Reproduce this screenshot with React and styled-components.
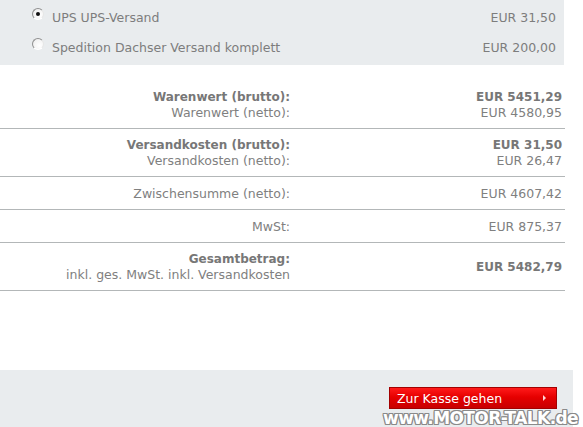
import React from 'react';
import styled, { createGlobalStyle } from 'styled-components';

const GlobalStyle = createGlobalStyle`
  html, body {
    margin: 0;
    padding: 0;
    background: #ffffff;
  }
  body {
    font-family: "DejaVu Sans", Verdana, sans-serif;
    color: #7b7b7b;
  }
`;

const Page = styled.div`
  position: relative;
  width: 583px;
  height: 427px;
  overflow: hidden;
  display: flex;
  flex-direction: column;
  background: #fff;
`;

const ShippingPanel = styled.div`
  width: 564px;
  height: 65px;
  background: #e9ecee;
  box-sizing: border-box;
  padding: 2px 8px 0 32px;
  display: flex;
  flex-direction: column;
`;

const ShippingRow = styled.label`
  display: flex;
  align-items: center;
  height: 30px;
  font-size: 12.5px;
  color: #7d7d7d;
`;

const Radio = styled.span`
  width: 12px;
  height: 12px;
  border-radius: 50%;
  box-sizing: border-box;
  background: radial-gradient(circle at 65% 65%, #ffffff 0%, #f4f4f4 60%, #e2e2e2 100%);
  border: 1px solid;
  border-color: #8f8f8f #e6e6e6 #ffffff #8f8f8f;
  display: flex;
  align-items: center;
  justify-content: center;
  margin-right: 8px;
  margin-top: -6px;

  &::after {
    content: '';
    width: 4px;
    height: 4px;
    border-radius: 50%;
    background: ${(p) => (p.checked ? '#111' : 'transparent')};
  }
`;

const ShipName = styled.span`
  flex: 1;
`;

const ShipPrice = styled.span`
  text-align: right;
`;

const Summary = styled.div`
  width: 565px;
  margin-top: 16px;
`;

const SummaryRow = styled.div`
  display: grid;
  grid-template-columns: 290px 1fr;
  align-items: center;
  padding: 9px 3px 8px 0;
  border-bottom: 1px solid #b3b7b8;
  line-height: 15px;
  color: #7b7b7b;
`;

const Label = styled.div`
  text-align: right;
  display: flex;
  flex-direction: column;
`;

const Amount = styled.div`
  text-align: right;
  display: flex;
  flex-direction: column;
`;

const Line = styled.span`
  font-size: ${(p) => (p.strong ? '12px' : '12.5px')};
  font-weight: ${(p) => (p.strong ? 'bold' : 'normal')};
  color: ${(p) => (p.strong ? '#777777' : '#808080')};
`;

const Spacer = styled.div`
  flex: 1;
`;

const Footer = styled.div`
  width: 573px;
  height: 57px;
  background: #e9ecee;
  box-sizing: border-box;
  padding: 17px 16px 0 0;
  display: flex;
  justify-content: flex-end;
  align-items: flex-start;
`;

const CheckoutButton = styled.button`
  width: 168px;
  height: 22px;
  box-sizing: border-box;
  border: 1px solid #a30000;
  background: linear-gradient(#ff1a1a 0%, #e60000 45%, #c80000 100%);
  color: #ffffff;
  font-family: "DejaVu Sans", Verdana, sans-serif;
  font-size: 12.5px;
  display: flex;
  align-items: center;
  justify-content: space-between;
  padding: 0 10px 0 7px;
  cursor: pointer;
`;

const Arrow = styled.span`
  width: 0;
  height: 0;
  border-top: 3px solid transparent;
  border-bottom: 3px solid transparent;
  border-left: 3px solid #ffd6d6;
`;

const Watermark = styled.span`
  position: absolute;
  right: 5px;
  bottom: 0;
  font-family: "DejaVu Sans", Verdana, sans-serif;
  font-weight: bold;
  font-size: 17px;
  line-height: 18px;
  letter-spacing: -0.6px;
  color: #ffffff;
  text-shadow:
    1px 0 #8a8a8a, -1px 0 #8a8a8a, 0 1px #8a8a8a, 0 -1px #8a8a8a,
    1px 1px #8a8a8a, -1px -1px #8a8a8a, 1px -1px #8a8a8a, -1px 1px #8a8a8a;
  pointer-events: none;
`;

const shipping = [
  { name: 'UPS UPS-Versand', price: 'EUR 31,50', checked: true },
  { name: 'Spedition Dachser Versand komplett', price: 'EUR 200,00', checked: false },
];

const rows = [
  {
    labels: [['Warenwert (brutto):', true], ['Warenwert (netto):', false]],
    amounts: [['EUR 5451,29', true], ['EUR 4580,95', false]],
  },
  {
    labels: [['Versandkosten (brutto):', true], ['Versandkosten (netto):', false]],
    amounts: [['EUR 31,50', true], ['EUR 26,47', false]],
  },
  {
    labels: [['Zwischensumme (netto):', false]],
    amounts: [['EUR 4607,42', false]],
  },
  {
    labels: [['MwSt:', false]],
    amounts: [['EUR 875,37', false]],
  },
  {
    labels: [['Gesamtbetrag:', true], ['inkl. ges. MwSt. inkl. Versandkosten', false]],
    amounts: [['EUR 5482,79', true]],
  },
];

export default function App() {
  return (
    <Page>
      <GlobalStyle />
      <ShippingPanel>
        {shipping.map((s) => (
          <ShippingRow key={s.name}>
            <Radio checked={s.checked} />
            <ShipName>{s.name}</ShipName>
            <ShipPrice>{s.price}</ShipPrice>
          </ShippingRow>
        ))}
      </ShippingPanel>

      <Summary>
        {rows.map((r, i) => (
          <SummaryRow key={i}>
            <Label>
              {r.labels.map(([t, b]) => (
                <Line key={t} strong={b}>{t}</Line>
              ))}
            </Label>
            <Amount>
              {r.amounts.map(([t, b]) => (
                <Line key={t} strong={b}>{t}</Line>
              ))}
            </Amount>
          </SummaryRow>
        ))}
      </Summary>

      <Spacer />

      <Footer>
        <CheckoutButton>
          Zur Kasse gehen
          <Arrow />
        </CheckoutButton>
      </Footer>

      <Watermark>www.MOTOR-TALK.de</Watermark>
    </Page>
  );
}
